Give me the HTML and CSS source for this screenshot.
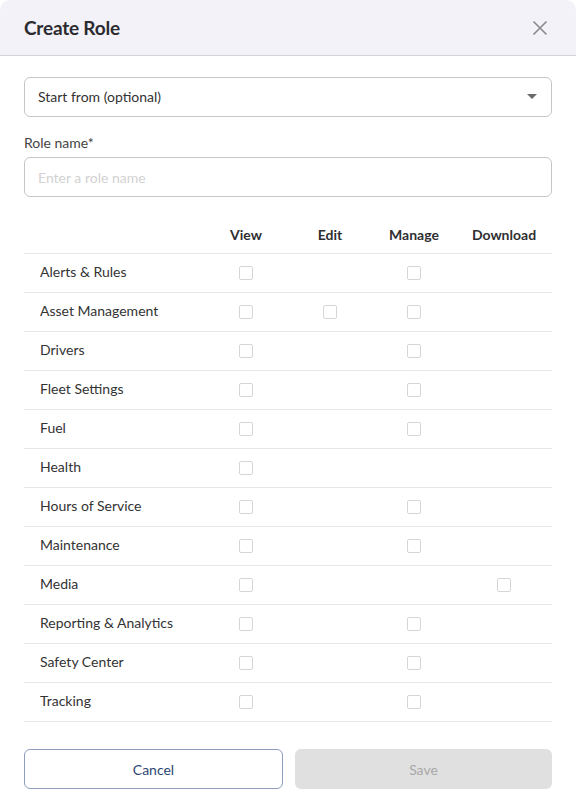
FILE: index.html
```html
<!DOCTYPE html>
<html lang="en">
<head>
  <meta charset="UTF-8" />
  <meta name="viewport" content="width=device-width, initial-scale=1.0"/>
  <title>Create Role</title>
  <link rel="stylesheet" href="styles.css">
</head>
<body>
  <div class="modal">
    <div class="modal-header">
      <h2>Create Role</h2>
      <button class="close-btn" aria-label="Close">
        <svg width="16" height="16" viewBox="0 0 16 16">
          <path d="M1.5 1.5 L14.5 14.5 M14.5 1.5 L1.5 14.5" stroke="#8a8a8a" stroke-width="1.6" fill="none"/>
        </svg>
      </button>
    </div>

    <div class="modal-body">
      <div class="select">
        <span>Start from (optional)</span>
        <span class="caret"></span>
      </div>

      <label class="field-label" for="role-name">Role name*</label>
      <input id="role-name" class="text-input" type="text" placeholder="Enter a role name"/>

      <table class="perm-table">
        <thead>
          <tr>
            <th class="name-col"></th>
            <th>View</th>
            <th>Edit</th>
            <th>Manage</th>
            <th>Download</th>
          </tr>
        </thead>
        <tbody id="perm-rows"></tbody>
      </table>
    </div>

    <div class="modal-footer">
      <button class="btn btn-cancel">Cancel</button>
      <button class="btn btn-save" disabled>Save</button>
    </div>
  </div>

  <script>
    // which permission columns each area offers: view, edit, manage, download
    const areas = [
      ["Alerts & Rules", 1, 0, 1, 0],
      ["Asset Management", 1, 1, 1, 0],
      ["Drivers", 1, 0, 1, 0],
      ["Fleet Settings", 1, 0, 1, 0],
      ["Fuel", 1, 0, 1, 0],
      ["Health", 1, 0, 0, 0],
      ["Hours of Service", 1, 0, 1, 0],
      ["Maintenance", 1, 0, 1, 0],
      ["Media", 1, 0, 0, 1],
      ["Reporting & Analytics", 1, 0, 1, 0],
      ["Safety Center", 1, 0, 1, 0],
      ["Tracking", 1, 0, 1, 0]
    ];

    const tbody = document.getElementById("perm-rows");
    areas.forEach(([name, ...cols]) => {
      const tr = document.createElement("tr");
      const td = document.createElement("td");
      td.className = "name-col";
      td.textContent = name;
      tr.appendChild(td);
      cols.forEach(has => {
        const cell = document.createElement("td");
        if (has) {
          const box = document.createElement("span");
          box.className = "checkbox";
          cell.appendChild(box);
        }
        tr.appendChild(cell);
      });
      tbody.appendChild(tr);
    });
  </script>
</body>
</html>
```

FILE: styles.css
```css
body {
  margin: 0;
  background: #fff;
  font-family: Lato, "Open Sans", sans-serif;
  color: #333;
}
.modal {
  width: 576px;
  background: #fff;
  border-radius: 10px 10px 0 0;
  overflow: hidden;
}
.modal-header {
  height: 56px;
  box-sizing: border-box;
  background: #f3f2f8;
  border-bottom: 1px solid #d4d4d8;
  display: flex;
  align-items: center;
  justify-content: space-between;
  padding: 0 28px 0 24px;
}
.modal-header h2 {
  margin: 0;
  font-size: 19px;
  font-weight: 700;
  color: #2b2b30;
  letter-spacing: -0.2px;
}
.close-btn {
  background: none;
  border: 0;
  padding: 0;
  width: 16px;
  height: 16px;
  cursor: pointer;
  display: flex;
}
.modal-body {
  padding: 21px 24px 0;
}
.select {
  height: 40px;
  box-sizing: border-box;
  border: 1px solid #c6c6c6;
  border-radius: 6px;
  display: flex;
  align-items: center;
  justify-content: space-between;
  padding: 0 14px 2px 13px;
  font-size: 14px;
  color: #333;
}
.caret {
  width: 0;
  height: 0;
  border-left: 5px solid transparent;
  border-right: 5px solid transparent;
  border-top: 5px solid #6b6b6b;
}
.field-label {
  display: block;
  margin-top: 17px;
  font-size: 14px;
  color: #444;
  line-height: 17px;
}
.text-input {
  display: block;
  width: 100%;
  height: 40px;
  box-sizing: border-box;
  margin-top: 6px;
  border: 1px solid #c6c6c6;
  border-radius: 6px;
  padding: 0 13px;
  font-family: inherit;
  font-size: 14px;
}
.text-input::placeholder {
  color: #d2d2d2;
}
.perm-table {
  width: 100%;
  border-collapse: collapse;
  margin-top: 18px;
  table-layout: fixed;
  font-size: 14px;
}
.perm-table th {
  font-weight: 700;
  color: #2f2f33;
  height: 38px;
  text-align: center;
  border-bottom: 1px solid #e6e6e6;
  width: 84px;
  padding: 0;
}
.perm-table th:last-child {
  width: 96px;
}
.perm-table th.name-col {
  width: 180px;
}
.perm-table td {
  height: 39px;
  box-sizing: border-box;
  border-bottom: 1px solid #e6e6e6;
  text-align: center;
  padding: 0 0 3px;
  vertical-align: middle;
}
.perm-table td.name-col {
  text-align: left;
  padding-left: 16px;
  color: #333;
}
.checkbox {
  display: inline-block;
  width: 12px;
  height: 12px;
  border: 1px solid #d6d6d6;
  border-radius: 2px;
  vertical-align: middle;
}
.modal-footer {
  display: flex;
  gap: 12px;
  padding: 27px 24px 20px;
}
.btn {
  flex: 1;
  height: 40px;
  border-radius: 6px;
  font-family: inherit;
  font-size: 14px;
  cursor: pointer;
}
.btn-cancel {
  background: #fff;
  border: 1px solid #8d9dbb;
  color: #2d4672;
}
.btn-save {
  background: #e0e0e0;
  border: 0;
  color: #a8a8a8;
  cursor: default;
}
```
